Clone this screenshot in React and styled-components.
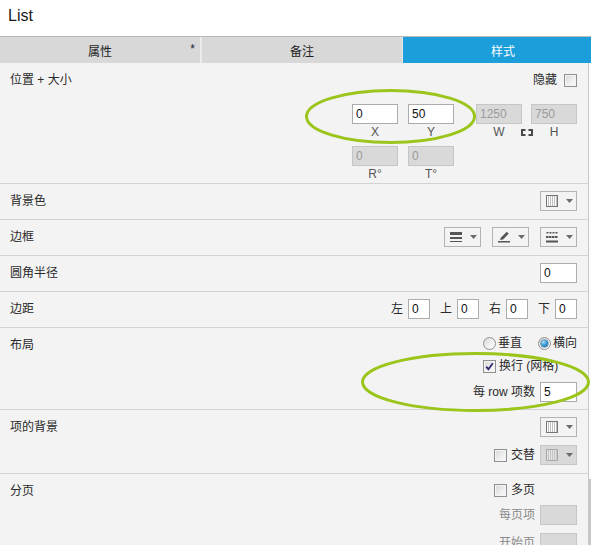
import React from 'react';
import styled, { createGlobalStyle } from 'styled-components';

const GlobalStyle = createGlobalStyle`
  html, body { margin: 0; padding: 0; background: #fff; }
  body {
    font-family: "Liberation Sans", "Noto Sans CJK SC", Arial, sans-serif;
    font-size: 12px;
    color: #333;
  }
  * { box-sizing: border-box; }
`;

const Root = styled.div`
  position: relative;
  width: 591px;
  height: 545px;
  overflow: hidden;
  background: #fff;
`;

const Header = styled.div`
  height: 37px;
  padding: 8px 8px 0;
  line-height: 16px;
  font-size: 16px;
  color: #1a1a1a;
  border-bottom: 1px solid #b9b9b9;
`;

const TabBar = styled.div`
  display: flex;
  height: 26px;
  background: #d8d8d8;
`;

const Tab = styled.div`
  position: relative;
  flex: 0 0 ${p => p.$w}px;
  display: flex;
  align-items: center;
  justify-content: center;
  background: ${p => (p.$active ? '#1b9ed9' : '#d8d8d8')};
  color: ${p => (p.$active ? '#fff' : '#222')};
  border-right: ${p => p.$sep}px solid ${p => (p.$sepColor || '#ececec')};
`;

const Star = styled.span`
  position: absolute;
  right: 5px;
  top: 5px;
  color: #223;
  font-size: 12px;
`;

const Body = styled.div`
  display: flex;
  height: 482px;
`;

const Panel = styled.div`
  flex: 1;
  background: #f3f3f3;
`;

const ScrollTrack = styled.div`
  width: 3px;
  border-left: 1px solid #c9c9c9;
  background: #fbfbfb;
  display: flex;
  flex-direction: column;
`;

const ScrollThumb = styled.div`
  margin-top: auto;
  height: 66px;
  background: #c6c6c6;
`;

const Section = styled.div`
  display: flex;
  justify-content: space-between;
  align-items: flex-start;
  padding: 7px 11px ${p => (p.$pb ?? 8)}px 10px;
  border-bottom: 1px solid #d3d3d3;
`;

const Label = styled.div`
  line-height: 20px;
  color: #2a2a2a;
`;

const Controls = styled.div`
  display: flex;
  flex-direction: column;
  align-items: flex-end;
  gap: ${p => p.$gap || 0}px;
`;

const Row = styled.div`
  display: flex;
  align-items: center;
  gap: ${p => p.$gap || 0}px;
  height: ${p => p.$h || 20}px;
  margin-top: ${p => p.$mt || 0}px;
  margin-right: ${p => p.$mr || 0}px;
  margin-bottom: ${p => p.$mb || 0}px;
`;

const Text = styled.span`
  color: ${p => (p.$muted ? '#8a8a8a' : '#2a2a2a')};
  white-space: nowrap;
  line-height: 16px;
`;

const Stack = styled.div`
  display: flex;
  flex-direction: column;
  align-items: flex-start;
  gap: ${p => p.$gap || 0}px;
`;

const Input = styled.input`
  width: ${p => p.$w || 46}px;
  height: 20px;
  margin: 0;
  padding: 0 3px;
  font-family: "Liberation Sans", Arial, sans-serif;
  font-size: 12px;
  color: #111;
  background: #fff;
  border: 1px solid #acacac;
  border-radius: 0;
  outline: none;
  &:disabled {
    background: #d9d9d9;
    border-color: #c6c6c6;
    color: #9b9b9b;
  }
`;

const FieldGrid = styled.div`
  display: grid;
  grid-template-columns: 46px 10px 46px 22px 46px 9px 46px;
  row-gap: 6px;
`;

const Field = styled.div`
  grid-column: ${p => p.$col};
  display: flex;
  flex-direction: column;
`;

const FieldLabel = styled.div`
  height: 16px;
  line-height: 16px;
  text-align: center;
  color: #555;
  font-size: 12px;
`;

const LinkCell = styled.div`
  grid-column: 6;
  grid-row: 1;
  margin-top: 20px;
  height: 16px;
  display: flex;
  align-items: center;
  justify-content: center;
  overflow: visible;
`;

const DropButton = styled.div`
  width: 37px;
  height: 20px;
  display: flex;
  align-items: center;
  justify-content: space-between;
  padding: 0 3px 0 5px;
  border: 1px solid ${p => (p.$disabled ? '#c6c6c6' : '#b3b3b3')};
  background: ${p => (p.$disabled ? '#d9d9d9' : '#f3f3f3')};
`;

const BoxCheck = styled.span`
  display: inline-flex;
  align-items: center;
  justify-content: center;
  width: 13px;
  height: 13px;
  border: 1px solid #8f9090;
  background: linear-gradient(135deg, #d6d6d6 0%, #eeeeee 55%, #fcfcfc 100%);
  box-shadow: inset 0 0 0 1px #f4f4f4;
`;

const RadioCircle = styled.span`
  display: inline-flex;
  align-items: center;
  justify-content: center;
  width: 13px;
  height: 13px;
  border-radius: 50%;
  border: 1px solid #8f9090;
  background: linear-gradient(135deg, #d9d9d9 0%, #f0f0f0 55%, #ffffff 100%);
`;

const RadioDot = styled.span`
  width: 7px;
  height: 7px;
  border-radius: 50%;
  background: radial-gradient(circle at 35% 30%, #a9e0fb 0%, #3c9ad3 45%, #145f95 100%);
  box-shadow: 0 0 0 0.5px #1c5b86;
`;

const RadioItem = styled.label`
  display: flex;
  align-items: center;
  gap: 2px;
`;

const Overlay = styled.svg`
  position: absolute;
  left: 0;
  top: 0;
  pointer-events: none;
`;

const Caret = () => (
  <svg width="7" height="4" viewBox="0 0 7 4">
    <polygon points="0,0 7,0 3.5,4" fill="#6b6b6b" />
  </svg>
);

const FillIcon = ({ faded }) => (
  <svg width="12" height="12" viewBox="0 0 12 12">
    <rect x="0.5" y="0.5" width="11" height="11" fill={faded ? '#e4e4e4' : '#fff'} stroke={faded ? '#a8a8a8' : '#757575'} />
    {[2, 4, 6, 8, 10].map(x => (
      <line key={x} x1={x + 0.5} y1="1" x2={x + 0.5} y2="11" stroke={faded ? '#c4c4c4' : '#bdbdbd'} />
    ))}
  </svg>
);

const WeightIcon = () => (
  <svg width="12" height="12" viewBox="0 0 12 12">
    <rect x="0" y="1" width="12" height="3" fill="#555" />
    <rect x="0" y="6" width="12" height="2" fill="#555" />
    <rect x="0" y="10" width="12" height="1" fill="#555" />
  </svg>
);

const PenIcon = () => (
  <svg width="12" height="12" viewBox="0 0 12 12">
    <path d="M2 9 L3 6.5 L8.8 0.8 L10.7 2.7 L5 8.4 Z" fill="#555" />
    <rect x="0" y="10" width="12" height="1.5" fill="#555" />
  </svg>
);

const DashIcon = () => (
  <svg width="12" height="12" viewBox="0 0 12 12">
    {[0, 3, 6, 9].map(x => (
      <rect key={'a' + x} x={x + 0.5} y="1" width="2" height="1.5" fill="#555" />
    ))}
    {[0, 3, 6, 9].map(x => (
      <rect key={'b' + x} x={x} y="5" width="2.5" height="2" fill="#555" />
    ))}
    <rect x="0" y="9.5" width="12" height="2" fill="#555" />
  </svg>
);

const LinkIcon = () => (
  <svg width="12" height="7" viewBox="0 0 12 7" style={{ flexShrink: 0 }}>
    <path d="M4.5 1 H1 V6 H4.5 M7.5 1 H11 V6 H7.5" fill="none" stroke="#4a4a4a" strokeWidth="2" />
  </svg>
);

const Checkbox = ({ checked }) => (
  <BoxCheck>
    {checked && (
      <svg width="9" height="9" viewBox="0 0 9 9">
        <path d="M1.2 4.6 L3.4 7.2 L7.8 1.2" fill="none" stroke="#2c2c6e" strokeWidth="1.8" />
      </svg>
    )}
  </BoxCheck>
);

const Radio = ({ checked, children }) => (
  <RadioItem>
    <RadioCircle>{checked && <RadioDot />}</RadioCircle>
    <Text>{children}</Text>
  </RadioItem>
);

const Drop = ({ icon, disabled }) => (
  <DropButton $disabled={disabled}>
    {icon}
    <Caret />
  </DropButton>
);

const PosField = ({ col, value, label, disabled }) => (
  <Field $col={col}>
    <Input $w={46} defaultValue={value} disabled={disabled} />
    <FieldLabel>{label}</FieldLabel>
  </Field>
);

export default function App() {
  return (
    <Root>
      <GlobalStyle />
      <Header>List</Header>
      <TabBar>
        <Tab $w={202} $sep={2}>属性<Star>*</Star></Tab>
        <Tab $w={201} $sep={1} $sepColor="#e6e6e6">备注</Tab>
        <Tab $w={200} $sep={0} $active>样式</Tab>
      </TabBar>
      <Body>
        <Panel>
          <Section $pb={1}>
            <Label>位置 + 大小</Label>
            <Controls>
              <Row $gap={7} $h={20} $mb={14}>
                <Text>隐藏</Text>
                <Checkbox />
              </Row>
              <FieldGrid>
                <PosField col={1} value="0" label="X" />
                <PosField col={3} value="50" label="Y" />
                <PosField col={5} value="1250" label="W" disabled />
                <LinkCell><LinkIcon /></LinkCell>
                <PosField col={7} value="750" label="H" disabled />
                <PosField col={1} value="0" label="R°" disabled />
                <PosField col={3} value="0" label="T°" disabled />
              </FieldGrid>
            </Controls>
          </Section>

          <Section>
            <Label>背景色</Label>
            <Controls>
              <Drop icon={<FillIcon />} />
            </Controls>
          </Section>

          <Section>
            <Label>边框</Label>
            <Row $gap={11}>
              <Drop icon={<WeightIcon />} />
              <Drop icon={<PenIcon />} />
              <Drop icon={<DashIcon />} />
            </Row>
          </Section>

          <Section>
            <Label>圆角半径</Label>
            <Input $w={37} defaultValue="0" />
          </Section>

          <Section>
            <Label>边距</Label>
            <Row>
              <Text>左</Text>
              <Input $w={22} defaultValue="0" style={{ marginLeft: 5 }} />
              <Text style={{ marginLeft: 10 }}>上</Text>
              <Input $w={22} defaultValue="0" style={{ marginLeft: 5 }} />
              <Text style={{ marginLeft: 10 }}>右</Text>
              <Input $w={22} defaultValue="0" style={{ marginLeft: 5 }} />
              <Text style={{ marginLeft: 10 }}>下</Text>
              <Input $w={22} defaultValue="0" style={{ marginLeft: 5 }} />
            </Row>
          </Section>

          <Section $pb={7}>
            <Label>布局</Label>
            <Controls>
              <Stack $gap={7}>
                <Row $gap={16} $h={16}>
                  <Radio>垂直</Radio>
                  <Radio checked>横向</Radio>
                </Row>
                <Row $gap={3} $h={16}>
                  <Checkbox checked />
                  <Text>换行 (网格)</Text>
                </Row>
              </Stack>
              <Row $gap={5} $mt={8}>
                <Text>每 row 项数</Text>
                <Input $w={37} defaultValue="5" />
              </Row>
            </Controls>
          </Section>

          <Section>
            <Label>项的背景</Label>
            <Controls $gap={8}>
              <Drop icon={<FillIcon />} />
              <Row>
                <Checkbox />
                <Text style={{ marginLeft: 4 }}>交替</Text>
                <div style={{ marginLeft: 5 }}>
                  <Drop icon={<FillIcon faded />} disabled />
                </div>
              </Row>
            </Controls>
          </Section>

          <Section>
            <Label>分页</Label>
            <Controls>
              <Row $gap={4} $h={18} $mr={42}>
                <Checkbox />
                <Text>多页</Text>
              </Row>
              <Row $gap={5} $mt={6}>
                <Text $muted>每页项</Text>
                <Input $w={37} disabled />
              </Row>
              <Row $gap={5} $mt={8}>
                <Text $muted>开始页</Text>
                <Input $w={37} disabled />
              </Row>
            </Controls>
          </Section>
        </Panel>
        <ScrollTrack>
          <ScrollThumb />
        </ScrollTrack>
      </Body>
      <Overlay width="591" height="545" viewBox="0 0 591 545">
        <ellipse cx="390.5" cy="116.5" rx="84" ry="26" fill="none" stroke="#9cc51c" strokeWidth="3" />
        <ellipse cx="475.5" cy="382" rx="113" ry="28.5" fill="none" stroke="#9cc51c" strokeWidth="3" />
      </Overlay>
    </Root>
  );
}
